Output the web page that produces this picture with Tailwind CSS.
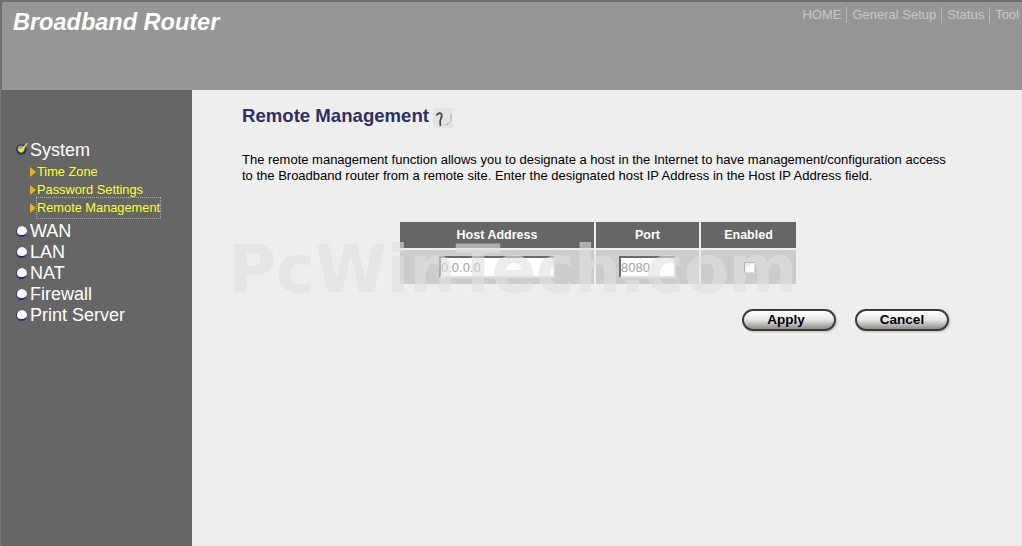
<!DOCTYPE html>
<html lang="en">

<head>
    <title>Broadband Router</title>
    <meta charset="UTF-8">
    <script src="https://cdn.jsdelivr.net/npm/@tailwindcss/browser@4"></script>
</head>

<body class="w-[1022px] h-[546px] overflow-hidden bg-[#eeeeee] font-['Liberation_Sans',Arial,sans-serif]">
    <!-- top bar -->
    <div class="h-[90px] flex justify-between bg-[#969696] border-t-2 border-l-2 border-[#6e6e6e] overflow-hidden">
        <h1 class="pl-[11px] pt-[6px] text-[23.5px] leading-[28px] font-bold italic text-white">Broadband Router</h1>
        <div class="pt-[4px] text-[13px] leading-[16px] text-[#c8c8c8] whitespace-nowrap flex items-center h-[22px]">
            <span>HOME</span><span class="mx-[5px] w-px h-[16px] bg-[#bdbba8]"></span>
            <span>General Setup</span><span class="mx-[5px] w-px h-[16px] bg-[#bdbba8]"></span>
            <span>Status</span><span class="mx-[5px] w-px h-[16px] bg-[#bdbba8]"></span>
            <span class="pr-[3px]">Tool</span>
        </div>
    </div>

    <div class="flex h-[456px]">
        <!-- side menu -->
        <div class="w-[192px] bg-[#666666] border-l border-[#7a7a7a] pl-[15px] pt-[50px] shrink-0">
            <div class="flex items-center h-[21px] text-[18px] text-white">
                <svg class="w-[14px] h-[14px] mb-[4px] shrink-0 overflow-visible" viewBox="0 0 14 14">
                    <circle cx="5.5" cy="7.5" r="5.2" fill="#2c2c88" />
                    <circle cx="5" cy="7" r="4.6" fill="#3a3a3a" />
                    <circle cx="5.2" cy="7" r="3.4" fill="#a0a0a8" />
                    <path d="M1.8 7 L5.5 10.5 L11.5 1 L5.5 7.5 Z" fill="#f6f01e" stroke="#f6f01e" stroke-width="0.8" />
                </svg>
                <span>System</span>
            </div>
            <div class="pt-[2px] pb-[4px] text-[12.8px] text-[#ffff33]">
                <div class="flex items-center h-[18px] pl-[14px]">
                    <svg class="w-[6px] h-[10px] mr-[1px]" viewBox="0 0 6 10"><path d="M0 0 L6 5 L0 10 Z" fill="#e8b010" /></svg>
                    <span>Time Zone</span>
                </div>
                <div class="flex items-center h-[18px] pl-[14px]">
                    <svg class="w-[6px] h-[10px] mr-[1px]" viewBox="0 0 6 10"><path d="M0 0 L6 5 L0 10 Z" fill="#e8b010" /></svg>
                    <span>Password Settings</span>
                </div>
                <div class="flex items-center h-[18px] pl-[14px]">
                    <svg class="w-[6px] h-[10px] mr-[1px]" viewBox="0 0 6 10"><path d="M0 0 L6 5 L0 10 Z" fill="#e8b010" /></svg>
                    <span class="outline-1 outline-dotted outline-[#aaaaaa]">Remote Management</span>
                </div>
            </div>
            <div class="text-[18px] text-white">
                <div class="flex items-center h-[21px]"><span class="w-[11px] h-[11px] mr-[3px] rounded-full bg-white border-b-2 border-l border-[#2c2c88]"></span>WAN</div>
                <div class="flex items-center h-[21px]"><span class="w-[11px] h-[11px] mr-[3px] rounded-full bg-white border-b-2 border-l border-[#2c2c88]"></span>LAN</div>
                <div class="flex items-center h-[21px]"><span class="w-[11px] h-[11px] mr-[3px] rounded-full bg-white border-b-2 border-l border-[#2c2c88]"></span>NAT</div>
                <div class="flex items-center h-[21px]"><span class="w-[11px] h-[11px] mr-[3px] rounded-full bg-white border-b-2 border-l border-[#2c2c88]"></span>Firewall</div>
                <div class="flex items-center h-[21px]"><span class="w-[11px] h-[11px] mr-[3px] rounded-full bg-white border-b-2 border-l border-[#2c2c88]"></span>Print Server</div>
            </div>
        </div>

        <!-- content -->
        <div class="relative flex-1 pl-[50px] pt-[14px]">
            <div class="flex items-center h-[25px]">
                <h2 class="pb-[2px] text-[18.6px] font-bold text-[#2f2f66]">Remote Management</h2>
                <div class="ml-[4px] mt-[2px] w-[20px] h-[20px] bg-[#e4e4e4]">
                    <svg class="w-[20px] h-[20px]" viewBox="0 0 20 20" fill="none">
                        <path d="M3.5 7.5 Q6 3.5 8.5 6 Q9.5 8.5 7.5 11.5 Q6.5 14 7.5 18" stroke="#444" stroke-width="1.7" />
                        <path d="M18 6 V13 Q15.5 16.5 12 17" stroke="#b4b4b4" stroke-width="1" />
                    </svg>
                </div>
            </div>
            <p class="mt-[23px] w-[706px] text-[13px] leading-[16px] text-black">The remote management function allows you to designate a host in the Internet to have management/configuration access to the Broadband router from a remote site. Enter the designated host IP Address in the Host IP Address field.</p>

            <div class="ml-[158px] mt-[38px] w-[396px] grid grid-cols-[194px_103px_95px] grid-rows-[26px_34px] gap-[2px]">
                <div class="bg-[#666666] text-white text-[12.5px] font-bold flex items-center justify-center">Host Address</div>
                <div class="bg-[#666666] text-white text-[12.5px] font-bold flex items-center justify-center">Port</div>
                <div class="bg-[#666666] text-white text-[12.5px] font-bold flex items-center justify-center">Enabled</div>
                <div class="bg-[#cccccc] flex items-center justify-center">
                    <input class="w-[116px] h-[22px] bg-white border-2 border-t-[#6a6a6a] border-l-[#6a6a6a] border-r-[#e0e0e0] border-b-[#e0e0e0] text-[13px] text-[#a0a0a0]" value="0.0.0.0" disabled>
                </div>
                <div class="bg-[#cccccc] flex items-center justify-center">
                    <input class="w-[57px] h-[22px] bg-white border-2 border-t-[#6a6a6a] border-l-[#6a6a6a] border-r-[#e0e0e0] border-b-[#e0e0e0] text-[13px] text-[#a0a0a0]" value="8080" disabled>
                </div>
                <div class="bg-[#cccccc] flex items-center justify-center pl-[2px]">
                    <span class="w-[11px] h-[11px] bg-white border border-t-[#707070] border-l-[#707070] border-r-[#dddddd] border-b-[#dddddd]"></span>
                </div>
            </div>

            <div class="flex ml-[500px] mt-[25px] gap-[19px]">
                <button class="w-[94px] h-[22px] pr-[6px] pb-px rounded-full border-2 border-[#3c3c3c] bg-gradient-to-b from-[#ffffff] via-[#e6e6e6] to-[#8c8c8c] text-[13.5px] leading-[16px] font-bold text-black shadow-[1px_1px_2px_#c8b8a0]">Apply</button>
                <button class="w-[94px] h-[22px] pb-px rounded-full border-2 border-[#3c3c3c] bg-gradient-to-b from-[#ffffff] via-[#e6e6e6] to-[#8c8c8c] text-[13.5px] leading-[16px] font-bold text-black shadow-[1px_1px_2px_#c8b8a0]">Cancel</button>
            </div>

            <!-- watermark sits over the table -->
            <div class="absolute left-[36px] top-[142px] text-[66px] leading-[76px] font-bold font-['DejaVu_Sans',sans-serif] tracking-[-0.5px] text-[#e0e0e0]/60 whitespace-nowrap pointer-events-none">PcWinTech.com</div>
        </div>
    </div>
</body>

</html>
